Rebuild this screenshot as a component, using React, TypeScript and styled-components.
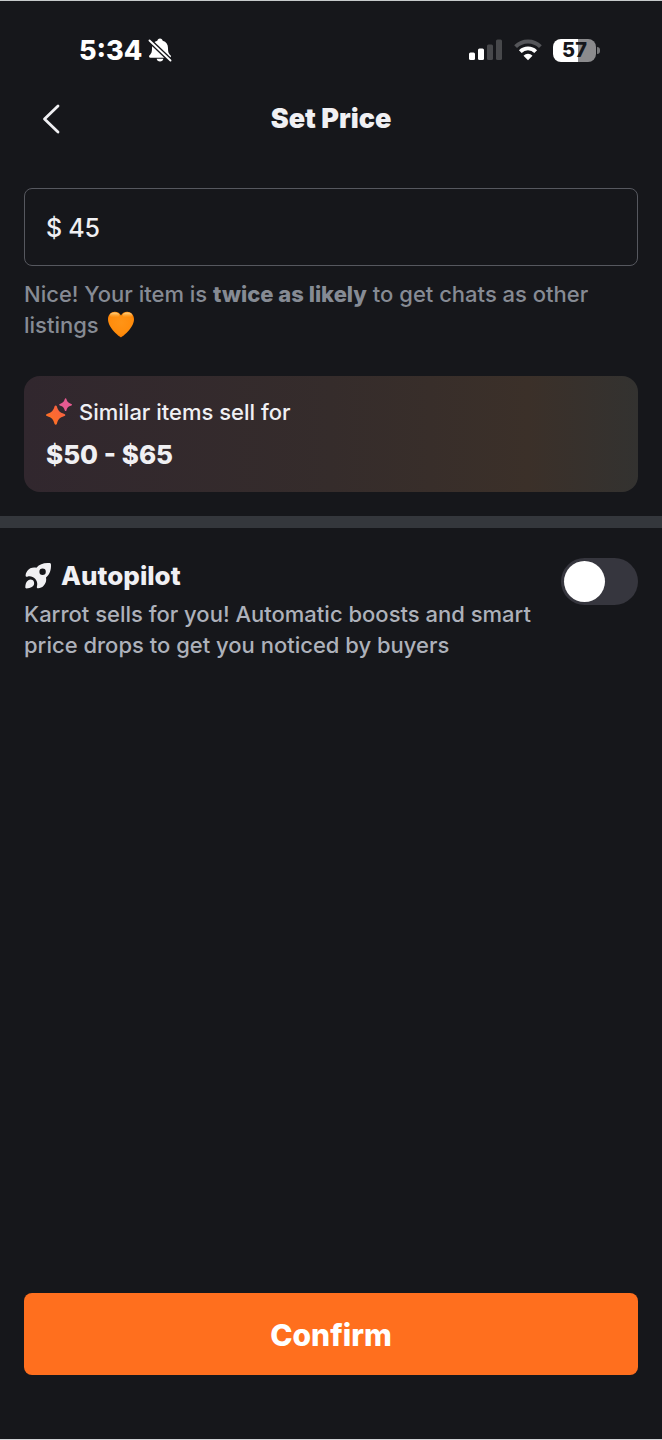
import { useState } from "react";
import styled, { createGlobalStyle } from "styled-components";

const GlobalStyle = createGlobalStyle`
  *, *::before, *::after { box-sizing: border-box; }
  body {
    margin: 0;
    background: #16171b;
    color: #f0f0f3;
    font-family: Inter, "Liberation Sans", sans-serif;
  }
  h1, h2, p { margin: 0; }
`;

const Screen = styled.div`
  display: flex;
  flex-direction: column;
  min-height: 100vh;
  border-top: 1px solid #c6cacb;
  border-bottom: 1px solid #d4d5d8;
`;

const StatusBar = styled.div`
  display: flex;
  align-items: center;
  justify-content: space-between;
  height: 80px;
  padding: 18px 62px 0 79px;
  color: #fff;
`;

const StatusGroup = styled.div<{ $gap: number }>`
  display: flex;
  align-items: center;
  gap: ${({ $gap }) => $gap}px;
`;

const Time = styled.span`
  padding-top: 1px;
  font-size: 27px;
  font-weight: 800;
  line-height: 32px;
`;

const Battery = styled.span`
  display: flex;
  align-items: center;
  gap: 1px;
`;

const BatteryBody = styled.span<{ $level: number }>`
  display: grid;
  place-items: center;
  width: 43px;
  height: 23px;
  border-radius: 8px;
  background: linear-gradient(90deg, #fff ${({ $level }) => $level}%, #8b8b8d ${({ $level }) => $level}%);
  color: #16171b;
  font-size: 20px;
  font-weight: 800;
  line-height: 23px;
`;

const BatteryTip = styled.span`
  width: 3px;
  height: 7px;
  border-radius: 0 3px 3px 0;
  background: #77787a;
`;

const Header = styled.header`
  display: grid;
  grid-template-columns: 54px 1fr 54px;
  align-items: center;
  height: 76px;
  padding: 0 24px;
`;

const BackButton = styled.button`
  display: grid;
  place-items: center;
  width: 54px;
  height: 56px;
  padding: 0;
  border: 0;
  background: none;
  color: #f0f0f3;
`;

const Title = styled.h1`
  font-size: 27px;
  font-weight: 900;
  line-height: 32px;
  text-align: center;
`;

const PriceSection = styled.section`
  padding: 31px 24px 24px;
`;

const PriceField = styled.label`
  display: flex;
  align-items: center;
  gap: 6px;
  height: 78px;
  padding: 1px 21px 0;
  border: 1px solid #56585f;
  border-radius: 8px;
  font-size: 25px;
  font-weight: 500;
  line-height: 32px;
`;

const PriceInput = styled.input`
  flex: 1;
  min-width: 0;
  padding: 0;
  border: 0;
  outline: 0;
  background: none;
  color: inherit;
  font: inherit;
`;

const Description = styled.p<{ $tone: string }>`
  color: ${({ $tone }) => $tone};
  font-size: 22px;
  font-weight: 550;
  line-height: 31px;
`;

const Hint = styled(Description)`
  margin-top: 13px;
  svg { margin-left: 2px; vertical-align: -5px; }
  strong { font-weight: 800; }
`;

const SimilarCard = styled.div`
  display: flex;
  flex-direction: column;
  gap: 11px;
  margin-top: 35px;
  padding: 20px 22px 21px;
  border-radius: 16px;
  background: linear-gradient(90deg, #31272e 0%, #352c2b 50%, #3b3029 82%, #333230 100%);
`;

const SimilarLabel = styled.p`
  display: flex;
  align-items: center;
  gap: 6px;
  font-size: 22px;
  font-weight: 550;
  line-height: 32px;
`;

const PriceRange = styled.p`
  font-size: 26px;
  font-weight: 800;
  line-height: 32px;
`;

const Divider = styled.hr`
  width: 100%;
  height: 12px;
  margin: 0;
  border: 0;
  background: #34373c;
`;

const AutopilotSection = styled.section`
  display: flex;
  align-items: flex-start;
  gap: 8px;
  padding: 30px 24px;
`;

const AutopilotText = styled.div`
  flex: 1;
`;

const AutopilotTitle = styled.h2`
  display: flex;
  align-items: center;
  gap: 9px;
  margin: 2px 0 7px;
  font-size: 26px;
  font-weight: 800;
  line-height: 32px;
`;

const Switch = styled.input`
  appearance: none;
  flex: none;
  display: flex;
  align-items: center;
  width: 77px;
  height: 47px;
  margin: 0;
  padding: 0 3px;
  border-radius: 24px;
  background: #36363e;

  &::before {
    content: "";
    width: 41px;
    height: 41px;
    border-radius: 50%;
    background: #fff;
  }
  &:checked {
    justify-content: flex-end;
    background: #ff6f1e;
  }
`;

const Footer = styled.footer`
  margin-top: auto;
  padding: 0 24px 64px;
`;

const ConfirmButton = styled.button`
  width: 100%;
  height: 82px;
  padding: 2px 0 0;
  border: 0;
  border-radius: 8px;
  background: #ff6f1e;
  color: #fff;
  font-family: inherit;
  font-size: 30px;
  font-weight: 800;
`;

const MutedBell = () => (
  <svg width="24" height="26" viewBox="0 0 24 26" aria-label="Silent mode">
    <path
      fill="#fff"
      d="M12 1.500c-1.600 0-2.500 1-2.700 2.300C5.600 4.900 4 7.600 4 11c0 4.600-.7 5.400-2.500 7.300-.9 1-.4 2.400.9 2.400h19.200c1.300 0 1.800-1.400.9-2.400-1.800-1.900-2.500-2.700-2.500-7.300 0-3.400-1.600-6.100-5.300-7.200C14.500 2.500 13.600 1.500 12 1.500ZM8.700 21.700h6.600c-.2 1.700-1.500 2.800-3.300 2.800s-3.100-1.100-3.300-2.800Z"
    />
    <path d="M1 3 23 24" stroke="#16171b" strokeWidth="4.600" />
    <path d="M1.500 3.500 22.500 23.500" stroke="#fff" strokeWidth="1.900" strokeLinecap="round" />
  </svg>
);

const Signal = () => (
  <svg width="34" height="22" viewBox="0 0 34 22" aria-label="Signal strength">
    <rect x="0" y="13.500" width="6" height="7.500" rx="1.500" fill="#fff" />
    <rect x="9" y="9.500" width="6" height="11.500" rx="1.500" fill="#fff" />
    <rect x="18" y="5.500" width="6" height="15.500" rx="1.500" fill="#47484b" />
    <rect x="27" y="0.500" width="6" height="20.500" rx="1.500" fill="#47484b" />
  </svg>
);

const Wifi = () => (
  <svg width="28" height="22" viewBox="0 0 28 22" fill="none" aria-label="Wi-Fi">
    <path d="M1.600 7.700a17.600 17.600 0 0 1 24.800 0" stroke="#55565a" strokeWidth="4" />
    <path d="M6.300 12.600a10.900 10.900 0 0 1 15.400 0" stroke="#fff" strokeWidth="3.900" />
    <path d="M9.500 16.700a6.300 6.300 0 0 1 9 0L14 21.200Z" fill="#fff" />
  </svg>
);

const BackIcon = () => (
  <svg width="20" height="32" viewBox="0 0 20 32" fill="none">
    <path d="M17 3 3.500 16 17 29" stroke="currentColor" strokeWidth="2.800" strokeLinecap="round" strokeLinejoin="round" />
  </svg>
);

const Heart = () => (
  <svg width="28" height="27" viewBox="0 0 28 27" aria-label="orange heart">
    <defs>
      <radialGradient id="heart-fill" cx="50%" cy="42%" r="62%">
        <stop offset="0" stopColor="#ff9416" />
        <stop offset="0.700" stopColor="#ff8c0c" />
        <stop offset="1" stopColor="#f87900" />
      </radialGradient>
      <linearGradient id="heart-shine" x1="0" y1="0" x2="0" y2="1">
        <stop offset="0" stopColor="#ffe2a0" stopOpacity="0.900" />
        <stop offset="1" stopColor="#ffb03c" stopOpacity="0" />
      </linearGradient>
    </defs>
    <path
      fill="url(#heart-fill)"
      d="M14 26.300C12.800 26.300 1 17 1 8.300 1 3.900 4 .7 7.800.7c2.900 0 5.100 1.500 6.200 3.900C15.100 2.200 17.300.7 20.200.7 24 .7 27 3.900 27 8.300 27 17 15.200 26.300 14 26.300Z"
    />
    <ellipse cx="7.500" cy="4" rx="4.800" ry="2.600" fill="url(#heart-shine)" />
    <ellipse cx="20.500" cy="4" rx="4.800" ry="2.600" fill="url(#heart-shine)" />
  </svg>
);

const Sparkles = () => (
  <svg width="27" height="28" viewBox="0 0 27 28" aria-hidden="true">
    <defs>
      <linearGradient id="sparkle-fill" x1="1" y1="0" x2="0" y2="1">
        <stop offset="0" stopColor="#f65d4c" />
        <stop offset="1" stopColor="#ff7519" />
      </linearGradient>
    </defs>
    <path
      fill="url(#sparkle-fill)"
      d="M9.700 7.400c.5 0 .9.300 1.100.8 1.500 4.900 2.500 5.900 7.600 7.700.6.200.9.500.9 1s-.3.900-.9 1.100c-5.100 1.800-6.100 2.900-7.600 7.900-.2.500-.6.800-1.100.8s-.9-.3-1.100-.8C7.100 20.900 6 19.800.9 18c-.5-.2-.9-.6-.9-1.100s.4-.8.900-1C6 14.100 7.100 13.100 8.600 8.200c.2-.5.600-.8 1.100-.8Z"
    />
    <path
      fill="#e75a91"
      d="M19.600.3c.4 0 .7.300.8.700.9 2.900 1.600 3.700 4.900 4.900.5.200.7.400.7.800s-.2.600-.7.800c-3.300 1.200-4 2-4.900 4.900-.1.400-.4.700-.8.700s-.7-.3-.8-.7c-.9-2.900-1.600-3.700-4.900-4.900-.5-.2-.7-.4-.7-.8s.2-.6.700-.8c3.300-1.200 4-2 4.900-4.900.1-.4.400-.7.800-.7Z"
    />
  </svg>
);

const Rocket = () => (
  <svg width="28" height="28" viewBox="0 0 28 28" fill="currentColor" aria-hidden="true">
    <path
      fillRule="evenodd"
      d="M25.800 1.100C19.800.6 15.800 2 12.400 5.700 8.700 5 5.400 6 3.200 8.900c-1 1.400-1.700 3.300-1.600 4.900.1.800.9 1.200 1.700.9 1.800-.7 3.500-.6 5.300.3 2 .9 3.400 2.500 4.200 4.500.6 1.700.6 3.300.1 4.900-.3.900.2 1.800 1.100 1.900 2 .1 4-.8 5.400-2.200 2.400-2.400 3.300-5.300 2.600-8.500 3.700-3.400 5.200-7.400 5-12.900-.1-.9-.4-1.500-1.200-1.600ZM18.600 6.600a3.200 3.200 0 1 1 0 6.400 3.200 3.200 0 0 1 0-6.400Z"
    />
    <path d="M4.300 18.200c2.100-1.300 4.600-.7 5.500 1.200.9 2.100.1 4.400-2 5.600-1.400.8-3.300 1.300-5.300 1.400-.7 0-1.200-.4-1.200-1.100.1-3.100.8-6 3-7.100Z" />
  </svg>
);

export default function App() {
  const [price, setPrice] = useState("45");
  const [autopilot, setAutopilot] = useState(false);

  return (
    <>
      <GlobalStyle />
      <Screen>
        <StatusBar>
          <StatusGroup $gap={6}>
            <Time>5:34</Time>
            <MutedBell />
          </StatusGroup>
          <StatusGroup $gap={11}>
            <Signal />
            <Wifi />
            <Battery>
              <BatteryBody $level={57}>57</BatteryBody>
              <BatteryTip />
            </Battery>
          </StatusGroup>
        </StatusBar>
        <Header>
          <BackButton type="button" aria-label="Back">
            <BackIcon />
          </BackButton>
          <Title>Set Price</Title>
        </Header>
        <main>
          <PriceSection>
            <PriceField>
              <span>$</span>
              <PriceInput
                aria-label="Price in dollars"
                inputMode="decimal"
                value={price}
                onChange={(event) => setPrice(event.target.value)}
              />
            </PriceField>
            <Hint $tone="#868b94">
              Nice! Your item is <strong>twice as likely</strong> to get chats as other listings <Heart />
            </Hint>
            <SimilarCard>
              <SimilarLabel>
                <Sparkles />
                Similar items sell for
              </SimilarLabel>
              <PriceRange>$50 - $65</PriceRange>
            </SimilarCard>
          </PriceSection>
          <Divider />
          <AutopilotSection>
            <AutopilotText>
              <AutopilotTitle>
                <Rocket />
                <label htmlFor="autopilot">Autopilot</label>
              </AutopilotTitle>
              <Description $tone="#adb1ba">
                Karrot sells for you! Automatic boosts and smart price drops to get you noticed by buyers
              </Description>
            </AutopilotText>
            <Switch
              id="autopilot"
              type="checkbox"
              role="switch"
              checked={autopilot}
              onChange={(event) => setAutopilot(event.target.checked)}
            />
          </AutopilotSection>
        </main>
        <Footer>
          <ConfirmButton type="button">Confirm</ConfirmButton>
        </Footer>
      </Screen>
    </>
  );
}
